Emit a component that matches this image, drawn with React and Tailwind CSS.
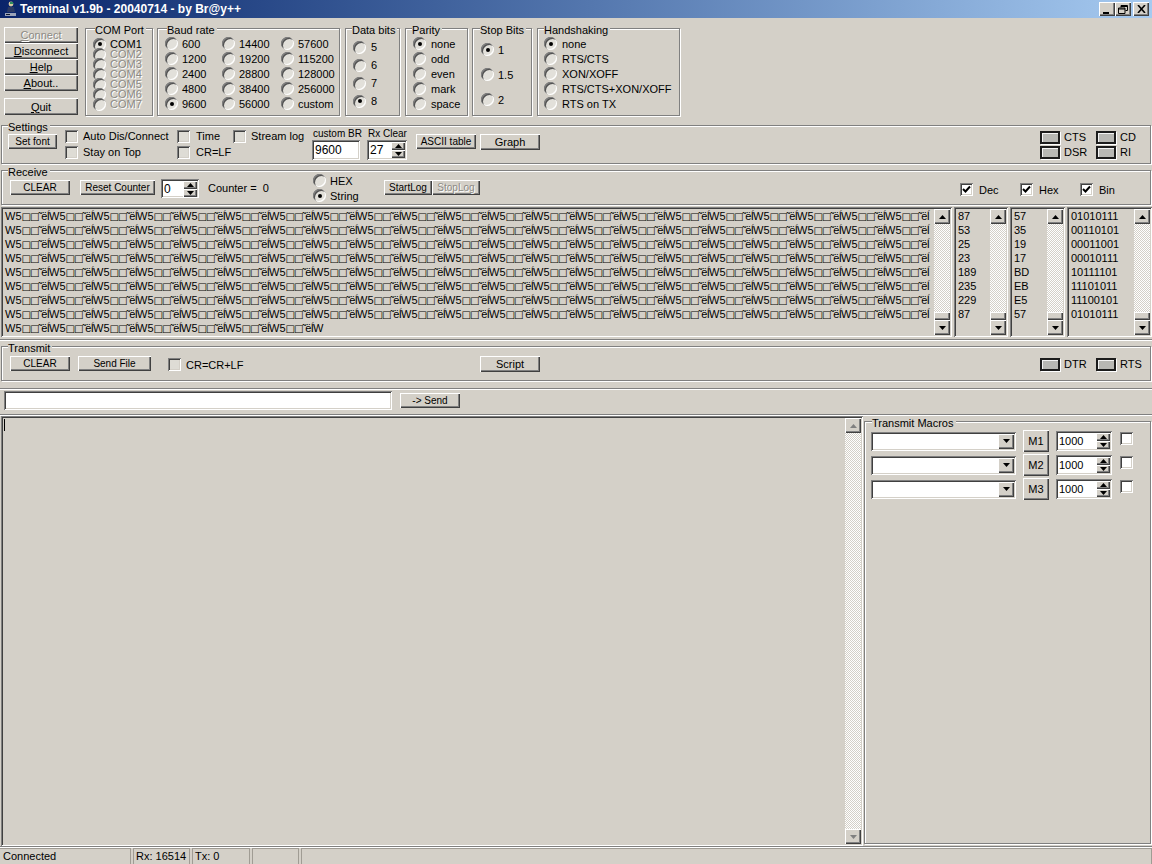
import React from "react";

const raised =
  "bg-[#d4d0c8] shadow-[inset_1px_1px_0_#ffffff,inset_-1px_-1px_0_#404040,inset_-2px_-2px_0_#808080]";
const sunken =
  "shadow-[inset_1px_1px_0_#808080,inset_-1px_-1px_0_#ffffff,inset_2px_2px_0_#404040,inset_-2px_-2px_0_#d4d0c8]";
const etched = "border border-[#808080] shadow-[1px_1px_0_#ffffff,inset_1px_1px_0_#ffffff]";
const dim = "text-[#8c8a84] [text-shadow:1px_1px_0_#ffffff]";

const Btn = ({ children, className = "", disabled, small }) => (
  <div
    className={`${raised} flex items-center justify-center shrink-0 ${small ? "text-[10px]" : ""} ${disabled ? dim : ""} ${className}`}
  >
    {children}
  </div>
);

const Arrow = ({ down, dark = "#000000" }) => (
  <svg width="7" height="4" viewBox="0 0 7 4">
    <polygon points={down ? "0,0 7,0 3.5,4" : "0,4 7,4 3.5,0"} fill={dark} />
  </svg>
);

const Radio = ({ on }) => (
  <span className="flex items-center justify-center shrink-0 size-[13px] rounded-full bg-[#e2e0da] shadow-[inset_1px_1px_0_#808080,inset_-1px_-1px_0_#ffffff,inset_2px_2px_0_#505050]">
    {on && <span className="size-[4px] rounded-full bg-black" />}
  </span>
);

const Opt = ({ label, on, disabled, className = "h-[15px]", gap = "gap-[4px]" }) => (
  <div className={`flex items-center ${gap} ${className}`}>
    <Radio on={on} />
    <span className={`whitespace-nowrap ${disabled ? dim : ""}`}>{label}</span>
  </div>
);

const Check = ({ on, white }) => (
  <span
    className={`flex items-center justify-center shrink-0 size-[13px] ${on || white ? "bg-white" : "bg-[#dedcd5]"} ${sunken}`}
  >
    {on && (
      <svg width="9" height="9" viewBox="0 0 9 9">
        <path d="M1 4l2.5 2.5L8 1.5" fill="none" stroke="#000" strokeWidth="2" />
      </svg>
    )}
  </span>
);

const CheckOpt = ({ label, on, className = "", gap = "gap-[5px]" }) => (
  <div className={`flex items-center ${gap} ${className}`}>
    <Check on={on} />
    <span className="whitespace-nowrap">{label}</span>
  </div>
);

const Group = ({ title, className = "", children, left = "left-[9px]" }) => (
  <div className={`relative shrink-0 ${etched} ${className}`}>
    <span className={`absolute top-[-5px] ${left} bg-[#d4d0c8] leading-[13px] pr-[2px] whitespace-nowrap`}>
      {title}
    </span>
    {children}
  </div>
);

const Led = ({ label, className = "" }) => (
  <div className={`flex items-center gap-[4px] ${className}`}>
    <span className="block w-[20px] h-[13px] border-2 border-[#1c1c1c] bg-[#b8b8b4] shadow-[inset_1px_1px_0_#f4f4f4,1px_1px_0_#ffffff] shrink-0" />
    <span>{label}</span>
  </div>
);

const Spin = ({ value, className = "", btnH = "h-[8px]" }) => (
  <div className={`${sunken} bg-white flex items-center justify-between shrink-0 pl-[3px] pr-[2px] ${className}`}>
    <span>{value}</span>
    <div className="flex flex-col">
      <div className={`${raised} w-[14px] ${btnH} flex items-center justify-center`}>
        <Arrow />
      </div>
      <div className={`${raised} w-[14px] ${btnH} flex items-center justify-center`}>
        <Arrow down />
      </div>
    </div>
  </div>
);

const ScrollBar = ({ off }) => (
  <div className="flex flex-col w-[16px] h-full shrink-0">
    <div className={`${raised} h-[15px] w-[16px] flex items-center justify-center shrink-0`}>
      <Arrow dark={off ? "#808080" : "#000000"} />
    </div>
    <div className="flex-1 flex flex-col justify-end bg-[repeating-conic-gradient(#ffffff_0_25%,#d4d0c8_0_50%)] bg-[length:2px_2px]">
      {!off && <div className={`${raised} h-[8px]`} />}
    </div>
    <div className={`${raised} h-[15px] w-[16px] flex items-center justify-center shrink-0`}>
      <Arrow down dark={off ? "#808080" : "#000000"} />
    </div>
  </div>
);

const ListBox = ({ rows, className = "" }) => (
  <div className={`${sunken} flex h-full p-[2px] shrink-0 ${className}`}>
    <div className="flex-1 min-w-0 pl-[2px]">
      {rows.map((r, i) => (
        <div key={i} className="h-[14px] leading-[14px] whitespace-nowrap">
          {r}
        </div>
      ))}
    </div>
    <ScrollBar />
  </div>
);

const Combo = () => (
  <div className={`${sunken} bg-white w-[145px] h-[19px] flex items-center justify-end pr-[2px]`}>
    <div className={`${raised} w-[16px] h-[15px] flex items-center justify-center`}>
      <Arrow down />
    </div>
  </div>
);

const MacroRow = ({ name }) => (
  <div className="flex items-center h-[24px]">
    <Combo />
    <Btn className="w-[26px] h-[22px] ml-[7px]">{name}</Btn>
    <Spin value="1000" className="w-[56px] h-[20px] ml-[7px]" />
    <div className="ml-[8px] mt-[-5px]">
      <Check white />
    </div>
  </div>
);

const WinBtn = ({ children, className = "" }) => (
  <div className={`${raised} w-[16px] h-[14px] flex items-center justify-center ${className}`}>{children}</div>
);

// the junk bytes the port keeps receiving; the two control bytes show as boxes
const JunkLine = ({ count, tail = "" }) => (
  <>
    {Array.from({ length: count }, (_, i) => (
      <React.Fragment key={i}>
        W5
        <span className="text-[10px] tracking-[-1px] font-['DejaVu_Sans',sans-serif]">{"\u25A1\u25A1"}</span>
        <span className="tracking-[-0.75px]">{"\u02DC\u00EB\u00CD"}</span>
      </React.Fragment>
    ))}
    {tail}
  </>
);

const decRows = ["87", "53", "25", "23", "189", "235", "229", "87"];
const hexRows = ["57", "35", "19", "17", "BD", "EB", "E5", "57"];
const binRows = ["01010111", "00110101", "00011001", "00010111", "10111101", "11101011", "11100101", "01010111"];
const textRows = [
  ...Array.from({ length: 8 }, (_, i) => <JunkLine key={i} count={21} />),
  <JunkLine key="last" count={7} tail="W" />,
];

const App = () => {
  return (
    <div className="w-[1152px] h-[864px] overflow-hidden bg-[#d4d0c8] text-[11px] leading-[14px] text-black font-['Liberation_Sans',Arial,sans-serif] flex flex-col">
      {/* title bar */}
      <div className="h-[18px] shrink-0 flex items-center bg-gradient-to-r from-[#0a246a] to-[#a6caf0] pl-[4px] pr-[3px]">
        <svg width="13" height="16" viewBox="0 0 13 16" className="shrink-0">
          <circle cx="7" cy="3" r="2.4" fill="#d8c9a0" />
          <path d="M6 1h3v2H6z" fill="#2f8f5f" />
          <path d="M4 6h6l1 5H3z" fill="#2b3a63" />
          <path d="M1 12h11v3H1z" fill="#9aa3b8" />
          <path d="M2 13h4v1H2z" fill="#10182f" />
        </svg>
        <span className="ml-[3px] text-white font-bold text-[12px] whitespace-nowrap">
          Terminal v1.9b - 20040714 - by Br@y++
        </span>
        <div className="ml-auto flex items-center">
          <WinBtn>
            <span className="block w-[6px] h-[2px] bg-black mt-[7px] mr-[3px]" />
          </WinBtn>
          <WinBtn>
            <svg width="10" height="9" viewBox="0 0 10 9">
              <path d="M3 .5h6.5v5H7.5M3 .5v2M3 1.5h6.5M.5 3h6.500v5.500h-6.500zM.5 4h6.500" fill="none" stroke="#000" />
            </svg>
          </WinBtn>
          <WinBtn className="ml-[2px]">
            <svg width="9" height="8" viewBox="0 0 9 8">
              <path d="M1 0l7 8M8 0L1 8" stroke="#000" strokeWidth="1.6" />
            </svg>
          </WinBtn>
        </div>
      </div>

      {/* port settings */}
      <div className="h-[107px] shrink-0 flex pl-[4px] pt-[9px]">
        <div className="w-[74px] shrink-0 flex flex-col">
          <Btn disabled className="h-[16px]">
            <span>
              <u>C</u>onnect
            </span>
          </Btn>
          <Btn className="h-[16px]">
            <span>
              <u>D</u>isconnect
            </span>
          </Btn>
          <Btn className="h-[16px]">
            <span>
              <u>H</u>elp
            </span>
          </Btn>
          <Btn className="h-[16px]">
            <span>
              <u>A</u>bout..
            </span>
          </Btn>
          <Btn className="h-[17px] mt-[7px]">
            <span>
              <u>Q</u>uit
            </span>
          </Btn>
        </div>

        <Group title="COM Port" className="w-[68px] h-[88px] ml-[7px] mt-[1px] pl-[7px] pt-[10px]">
          <Opt label="COM1" on className="h-[10px]" />
          {["COM2", "COM3", "COM4", "COM5", "COM6", "COM7"].map((c) => (
            <Opt key={c} label={c} disabled className="h-[10px]" />
          ))}
        </Group>

        <Group title="Baud rate" className="w-[183px] h-[88px] ml-[4px] mt-[1px] pl-[7px] pt-[7px] flex">
          <div className="w-[57px]">
            {["600", "1200", "2400", "4800"].map((b) => (
              <Opt key={b} label={b} />
            ))}
            <Opt label="9600" on />
          </div>
          <div className="w-[59px]">
            {["14400", "19200", "28800", "38400", "56000"].map((b) => (
              <Opt key={b} label={b} />
            ))}
          </div>
          <div>
            {["57600", "115200", "128000", "256000", "custom"].map((b) => (
              <Opt key={b} label={b} />
            ))}
          </div>
        </Group>

        <Group title="Data bits" left="left-[6px]" className="w-[55px] h-[88px] ml-[5px] mt-[1px] pl-[7px] pt-[9px]">
          {["5", "6", "7"].map((b) => (
            <Opt key={b} label={b} className="h-[18px]" gap="gap-[5px]" />
          ))}
          <Opt label="8" on className="h-[18px]" gap="gap-[5px]" />
        </Group>

        <Group title="Parity" left="left-[6px]" className="w-[63px] h-[88px] ml-[5px] mt-[1px] pl-[7px] pt-[7px]">
          <Opt label="none" on gap="gap-[5px]" />
          {["odd", "even", "mark", "space"].map((b) => (
            <Opt key={b} label={b} gap="gap-[5px]" />
          ))}
        </Group>

        <Group title="Stop Bits" left="left-[7px]" className="w-[60px] h-[88px] ml-[4px] mt-[1px] pl-[8px] pt-[8px]">
          <Opt label="1" on className="h-[25px]" />
          <Opt label="1.5" className="h-[25px]" />
          <Opt label="2" className="h-[25px]" />
        </Group>

        <Group title="Handshaking" left="left-[6px]" className="w-[143px] h-[88px] ml-[5px] mt-[1px] pl-[6px] pt-[7px]">
          <Opt label="none" on gap="gap-[5px]" />
          {["RTS/CTS", "XON/XOFF", "RTS/CTS+XON/XOFF", "RTS on TX"].map((b) => (
            <Opt key={b} label={b} gap="gap-[5px]" />
          ))}
        </Group>
      </div>

      {/* settings */}
      <Group title="Settings" left="left-[6px]" className="w-[1150px] h-[39px] ml-[1px] pl-[6px] flex">
        <Btn small className="w-[49px] h-[15px] mt-[8px]">
          Set font
        </Btn>
        <div className="w-[112px] ml-[8px] mt-[3px] shrink-0">
          <CheckOpt label="Auto Dis/Connect" className="h-[14px]" />
          <CheckOpt label="Stay on Top" className="h-[14px] mt-[2px]" />
        </div>
        <div className="w-[56px] mt-[3px] shrink-0">
          <CheckOpt label="Time" className="h-[14px]" gap="gap-[6px]" />
          <CheckOpt label="CR=LF" className="h-[14px] mt-[2px]" gap="gap-[6px]" />
        </div>
        <div className="w-[79px] mt-[3px] shrink-0">
          <CheckOpt label="Stream log" className="h-[14px]" />
        </div>
        <div className="w-[55px] shrink-0 mt-[2px]">
          <div className="text-[10px] leading-[12px] pl-[1px]">custom BR</div>
          <div className={`${sunken} bg-white w-[48px] h-[20px] flex items-center pl-[3px] text-[12px]`}>9600</div>
        </div>
        <div className="w-[49px] shrink-0 mt-[2px]">
          <div className="text-[10px] leading-[12px] pl-[1px]">Rx Clear</div>
          <Spin value="27" className="w-[40px] h-[20px] text-[12px]" />
        </div>
        <Btn small className="w-[60px] h-[15px] mt-[8px]">
          ASCII table
        </Btn>
        <Btn className="w-[60px] h-[16px] mt-[8px] ml-[4px]">Graph</Btn>
        <div className="ml-auto w-[110px] mt-[4px] shrink-0 grid grid-cols-[56px_54px] content-start gap-y-[1px]">
          <Led label="CTS" />
          <Led label="CD" />
          <Led label="DSR" />
          <Led label="RI" />
        </div>
      </Group>

      {/* receive */}
      <Group title="Receive" left="left-[6px]" className="w-[1150px] h-[35px] ml-[1px] mt-[6px] pl-[8px] flex">
        <Btn small className="w-[60px] h-[15px] mt-[9px]">
          CLEAR
        </Btn>
        <Btn small className="w-[75px] h-[15px] mt-[9px] ml-[10px]">
          Reset Counter
        </Btn>
        <Spin value="0" className="w-[38px] h-[19px] mt-[8px] ml-[6px] text-[12px]" />
        <div className="w-[105px] ml-[9px] mt-[10px] leading-[15px] shrink-0">Counter =&nbsp; 0</div>
        <div className="w-[71px] mt-[2px] shrink-0">
          <Opt label="HEX" gap="gap-[4px]" />
          <Opt label="String" on gap="gap-[4px]" />
        </div>
        <Btn small className="w-[48px] h-[15px] mt-[9px]">
          StartLog
        </Btn>
        <Btn small disabled className="w-[48px] h-[15px] mt-[9px]">
          StopLog
        </Btn>
        <div className="ml-[480px] flex mt-[12px]">
          <CheckOpt label="Dec" on className="w-[60px] h-[13px]" gap="gap-[6px]" />
          <CheckOpt label="Hex" on className="w-[60px] h-[13px]" gap="gap-[6px]" />
          <CheckOpt label="Bin" on className="w-[60px] h-[13px]" gap="gap-[6px]" />
        </div>
      </Group>

      {/* receive lists */}
      <div className="h-[130px] shrink-0 mt-[2px] ml-[1px] flex gap-[2px]">
        <ListBox className="w-[951px]" rows={textRows} />
        <ListBox className="w-[54px]" rows={decRows} />
        <ListBox className="w-[55px]" rows={hexRows} />
        <ListBox className="w-[85px]" rows={binRows} />
      </div>
      <div className="h-[2px] shrink-0 mt-[2px] border-t border-[#808080] bg-white" />

      {/* transmit */}
      <Group title="Transmit" left="left-[6px]" className="w-[1150px] h-[35px] ml-[1px] mt-[5px] pl-[8px] flex">
        <Btn small className="w-[60px] h-[15px] mt-[9px]">
          CLEAR
        </Btn>
        <Btn small className="w-[73px] h-[15px] mt-[9px] ml-[8px]">
          Send File
        </Btn>
        <div className="w-[312px] ml-[17px] mt-[11px] shrink-0">
          <CheckOpt label="CR=CR+LF" className="h-[13px]" />
        </div>
        <Btn className="w-[60px] h-[16px] mt-[9px]">Script</Btn>
        <div className="ml-auto w-[110px] mt-[10px] shrink-0 grid grid-cols-[56px_54px] content-start">
          <Led label="DTR" />
          <Led label="RTS" />
        </div>
      </Group>

      {/* send row */}
      <div className="h-[26px] shrink-0 mt-[7px] border-t border-[#808080] shadow-[inset_0_1px_0_#ffffff] flex pl-[4px]">
        <div className={`${sunken} bg-white w-[388px] h-[19px] mt-[2px]`} />
        <Btn small className="w-[60px] h-[15px] mt-[4px] ml-[8px]">
          -&gt; Send
        </Btn>
      </div>
      <div className="h-[2px] shrink-0 border-t border-[#808080] bg-white" />

      {/* output and macros */}
      <div className="h-[430px] shrink-0 ml-[1px] flex">
        <div className={`${sunken} w-[862px] h-full shrink-0 flex justify-between p-[2px]`}>
          <span className="block w-px h-[12px] bg-black mt-[1px] ml-[1px]" />
          <ScrollBar off />
        </div>
        <Group
          title="Transmit Macros"
          left="left-[7px]"
          className="w-[287px] h-[423px] ml-[1px] mt-[5px] pl-[6px] pt-[7px]"
        >
          <MacroRow name="M1" />
          <MacroRow name="M2" />
          <MacroRow name="M3" />
        </Group>
      </div>

      {/* status bar */}
      <div className="flex-1 border-t border-[#808080] shadow-[inset_0_1px_0_#ffffff] flex gap-[2px] pt-[1px] overflow-hidden whitespace-nowrap">
        <div className="w-[131px] h-[17px] pl-[3px] border-t border-r border-[#a09c94] shrink-0">Connected</div>
        <div className="w-[57px] h-[17px] pl-[2px] border-t border-x border-[#a09c94] shrink-0">Rx: 16514</div>
        <div className="w-[58px] h-[17px] pl-[2px] border-t border-x border-[#a09c94] shrink-0">Tx: 0</div>
        <div className="w-[47px] h-[17px] border-t border-x border-[#a09c94] shrink-0" />
        <div className="flex-1 h-[17px] border-t border-x border-[#a09c94]" />
      </div>
    </div>
  );
};

export default App;
